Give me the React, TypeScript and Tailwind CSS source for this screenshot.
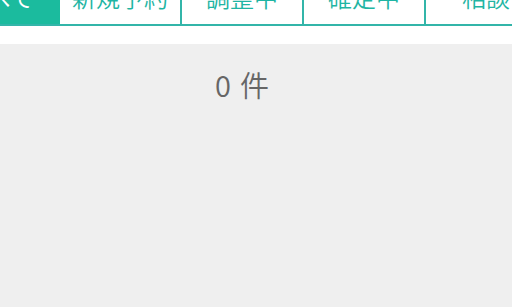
import React from "react";

const tabs = ["新規予約", "調整中", "確定中", "相談"];

export default function App() {
  return (
    <div
      className="w-[512px] h-[307px] overflow-hidden bg-white"
      style={{ fontFamily: '"Noto Sans CJK JP", "Noto Sans", sans-serif' }}
    >
      <div className="h-[26px] overflow-hidden border-b-2 border-[#33b5a9]">
        <div className="flex -mt-[26px] -ml-[62px] w-[700px]">
          <div className="w-[122px] h-[50px] shrink-0 bg-[#1bbb9e] text-white text-[24px] font-[350] leading-[46px] text-center">
            すべて
          </div>
          {tabs.map((t) => (
            <div
              key={t}
              className="w-[122px] h-[50px] shrink-0 bg-white text-[#1fb5a3] text-[24px] font-[350] leading-[46px] text-center border-r-2 border-[#33b5a9]"
            >
              {t}
            </div>
          ))}
        </div>
      </div>
      <div className="h-[18px] bg-white" />
      <div className="bg-[#efefef] h-[263px] pt-[20px]">
        <div className="pl-[215px] text-[29px] font-[350] leading-[40px] text-[#666666]">
          0<span className="ml-[9px]">件</span>
        </div>
      </div>
    </div>
  );
}
